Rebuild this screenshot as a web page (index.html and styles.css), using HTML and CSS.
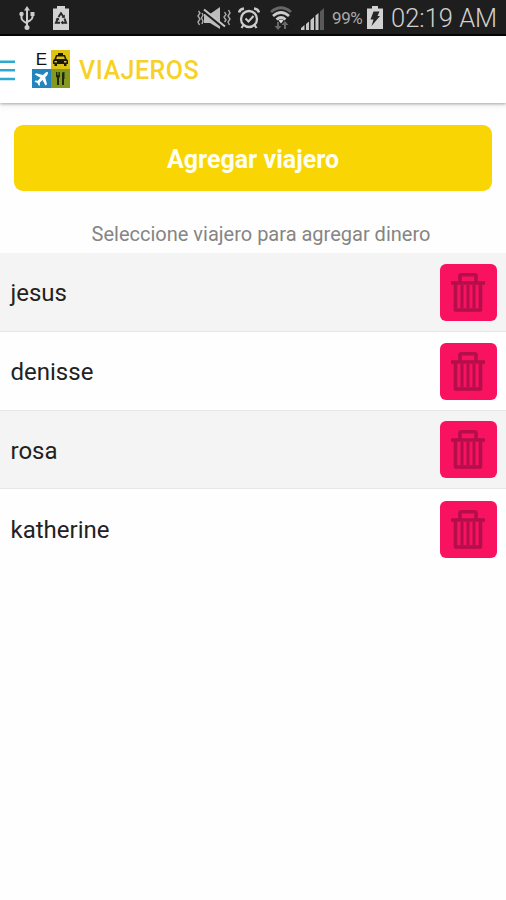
FILE: index.html
```
<!DOCTYPE html>
<html lang="es">

<head>
    <meta charset="UTF-8">
    <meta name="viewport" content="width=device-width, initial-scale=1.0">
    <title>Viajeros</title>
    <link rel="stylesheet" href="styles.css">
</head>

<body>
    <!-- shared icon -->
    <svg class="sprite" width="0" height="0">
        <symbol id="icon-trash" viewBox="0 0 34 39">
            <g fill="none" stroke="currentColor" stroke-width="3.6" stroke-linejoin="round">
                <path d="M9 9V3Q9 1.800 10.500 1.800H23.500Q25 1.800 25 3V9" />
                <path d="M0 10H34" />
                <path d="M4.500 10V37H29.500V10" />
                <path d="M11 12V35M17 12V35M23 12V35" stroke-width="3" />
            </g>
        </symbol>
    </svg>

    <div class="status-bar">
        <div class="status-left">
            <svg class="icon-usb" viewBox="0 0 16 24">
                <g fill="none" stroke="#ccc" stroke-width="2">
                    <path d="M8 3V21M2.500 8V12Q2.500 14 5 15.500L8 17.500M13.500 8V11Q13.500 13 11 14.500L8 16" />
                </g>
                <g fill="#ccc">
                    <path d="M8 0L11 4.500H5Z" />
                    <circle cx="2.500" cy="8" r="2.200" />
                    <path d="M11.500 6H15.500V10H11.500Z" />
                    <circle cx="8" cy="21.500" r="2.500" />
                </g>
            </svg>
            <svg class="icon-recycle" viewBox="0 0 18 24">
                <path d="M5 0H13V2.500H17V24H1V2.500H5Z" fill="#d2d2d2" />
                <g fill="none" stroke="#292929" stroke-width="2">
                    <path d="M6.500 11L9 7.300L11.600 11" />
                    <path d="M12.500 12.500L14 16.700H10.300" />
                    <path d="M8 16.700H4L5.800 12.500" />
                </g>
                <path d="M12.800 8.500V12L9.500 11.500ZM11 14.500V18.500L8.500 16.700ZM3.500 13L6.500 11.500L7.500 14.500Z" fill="#292929" />
            </svg>
        </div>

        <div class="status-right">
            <svg class="icon-mute" viewBox="0 0 34 22">
                <path d="M7 7H13L23 0V22L13 16H7Z" fill="#bdbdbd" />
                <path d="M6 3.500L28 21.500" stroke="#1e1e1e" stroke-width="3" />
                <path d="M7 2.500L28 19.500" stroke="#c4c4c4" stroke-width="2.200" />
                <g fill="none" stroke="#aaa" stroke-width="1.400">
                    <path d="M1.500 4L3 6L1 9L3 12L1 15L2.500 18" />
                    <path d="M5 6L6 8L4.500 11L6 14L5 17" />
                    <path d="M27.500 5L29 7.500L27 10L29 13L27.500 15" />
                    <path d="M31.500 3L33 6L31 9L33 12L31 15L32.500 18" />
                </g>
            </svg>
            <svg class="icon-alarm" viewBox="0 0 22 22">
                <g fill="none" stroke="#ccc">
                    <circle cx="11" cy="12" r="8" stroke-width="2.300" />
                    <path d="M1 5.500Q2 2 6 1.500M21 5.500Q20 2 16 1.500" stroke-width="2.500" />
                    <path d="M7.500 11.500L10.500 14.500L15.500 9" stroke-width="2" />
                    <path d="M5.500 18L3.500 21M16.500 18L18.500 21" stroke-width="2.200" />
                </g>
            </svg>
            <svg class="icon-wifi" viewBox="0 0 22 24">
                <g fill="none" stroke-width="2.700">
                    <path d="M1 6Q11 -2.500 21 6" stroke="#666" />
                    <path d="M3 10Q11 3 19 10" stroke="#ccc" />
                    <path d="M6.500 13.500Q11 9.500 15.500 13.500" stroke="#ccc" />
                </g>
                <path d="M8.500 14.500Q11 12.500 13.500 14.500L11 17.500Z" fill="#ddd" />
                <path d="M8 24L4.500 20H7V16H9V20H11.500ZM15 15L18.500 19H16V23H14V19H11.500Z" fill="#696969" />
            </svg>
            <svg class="icon-signal" viewBox="0 0 24 22">
                <g fill="#c6c6c6">
                    <path d="M0 22V20L3.500 17V22Z" />
                    <path d="M5 22V16L8 13.500V22Z" />
                    <path d="M9.500 22V12L13 9V22Z" />
                    <path d="M14.500 22V7.500L17.500 5V22Z" />
                </g>
                <path d="M19 22V3.500L23 0V22Z" fill="#595959" />
            </svg>
            <span class="battery-level">99%</span>
            <svg class="icon-battery" viewBox="0 0 16 23">
                <path d="M5 0H11V2.500H16V23H0V2.500H5Z" fill="#d2d2d2" />
                <path d="M6.500 5.500H12.500L10.500 10H13L4.500 20L6.500 13.500H3.500Z" fill="#252525" />
            </svg>
            <span class="clock">02:19 AM</span>
        </div>
    </div>

    <header class="header">
        <svg class="icon-menu" viewBox="0 0 15 21">
            <path d="M0 1.700H15M0 10.300H15M0 18.900H15" stroke="#2eaad2" stroke-width="2.500" />
        </svg>
        <div class="logo">
            <span class="logo-cell logo-letter">E</span>
            <span class="logo-cell logo-taxi">
                <svg viewBox="0 0 19 19">
                    <path d="M7 3H12V5H14L15.500 9Q17 9.500 17 11V14H15.500V16H13V14H6V16H3.500V14H2V11Q2 9.500 3.500 9L5 5H7Z" fill="#1b1a05" />
                    <path d="M6 6.500H13L13.800 9H5.200Z" fill="#ddc412" />
                    <path d="M3.500 11H6V12.500H3.500ZM13 11H15.500V12.500H13Z" fill="#ddc412" />
                </svg>
            </span>
            <span class="logo-cell logo-plane">
                <svg viewBox="0 0 19 19">
                    <path d="M15.800 3Q14.500 2.500 12.800 4.200L11 6L4 4.200L2.800 5.500L8.500 8.700L5.700 11.700L3.500 11.400L2.500 12.500L5.500 14L7 17L8 16L7.700 13.800L10.500 11L13.500 16.500L15 15.200L13.200 8.200L15 6.400Q16.500 4.500 15.800 3Z" fill="#fff" />
                </svg>
            </span>
            <span class="logo-cell logo-food">
                <svg viewBox="0 0 19 19">
                    <path d="M5 3H6V6H6.600V3H7.500V6H8.100V3H9V7.500L8 9V16H6V9L5 7.500ZM11 16V4Q11 3 13.500 3V10H13V16Z" fill="#20280b" />
                </svg>
            </span>
        </div>
        <h1 class="title">VIAJEROS</h1>
    </header>

    <main class="content">
        <button class="add-button" type="button"><span>Agregar viajero</span></button>
        <p class="hint">Seleccione viajero para agregar dinero</p>

        <ul class="traveler-list">
            <li class="traveler">
                <span class="traveler-name">jesus</span>
                <button class="delete-button" type="button" aria-label="Eliminar"><svg class="icon-trash"><use href="#icon-trash" /></svg></button>
            </li>
            <li class="traveler">
                <span class="traveler-name">denisse</span>
                <button class="delete-button" type="button" aria-label="Eliminar"><svg class="icon-trash"><use href="#icon-trash" /></svg></button>
            </li>
            <li class="traveler">
                <span class="traveler-name">rosa</span>
                <button class="delete-button" type="button" aria-label="Eliminar"><svg class="icon-trash"><use href="#icon-trash" /></svg></button>
            </li>
            <li class="traveler">
                <span class="traveler-name">katherine</span>
                <button class="delete-button" type="button" aria-label="Eliminar"><svg class="icon-trash"><use href="#icon-trash" /></svg></button>
            </li>
        </ul>
    </main>
</body>

</html>
```
FILE: styles.css
```
* {
    margin: 0;
    padding: 0;
    box-sizing: border-box;
}

body {
    font-family: Roboto, "Liberation Sans", sans-serif;
    min-height: 100vh;
    background-color: #fefefe;
    color: #222;
    overflow: hidden;
}

svg {
    display: block;
    flex-shrink: 0;
}

.sprite {
    position: absolute;
}

/* status bar */
.status-bar {
    display: flex;
    justify-content: space-between;
    height: 36px;
    padding: 1px 9px 0 19px;
    background-color: #1e1e1e;
    border-bottom: 2px solid #050505;
}

.status-left,
.status-right {
    display: flex;
    align-items: center;
}

.status-left {
    gap: 17px;
}

.icon-usb {
    width: 16px;
    height: 24px;
}

.icon-recycle {
    width: 18px;
    height: 24px;
}

.icon-mute {
    width: 34px;
    height: 22px;
    margin-right: 7px;
}

.icon-alarm {
    width: 22px;
    height: 22px;
    margin-right: 10px;
}

.icon-wifi {
    width: 22px;
    height: 24px;
    margin-right: 9px;
}

.icon-signal {
    width: 24px;
    height: 22px;
    margin: 3px 7px 0 0;
}

.battery-level {
    width: 35px;
    font-size: 17px;
    letter-spacing: -0.4px;
    color: #aaa;
    padding-top: 1px;
}

.icon-battery {
    width: 16px;
    height: 23px;
    margin-right: 8px;
}

.clock {
    width: 106px;
    font-size: 25.5px;
    font-weight: 300;
    color: #d0d0d0;
    white-space: nowrap;
    padding-top: 1px;
}

/* header */
.header {
    display: flex;
    align-items: center;
    height: 67px;
    padding-top: 2px;
    background-color: #fff;
    box-shadow: 0 1px 3px rgba(0, 0, 0, 0.35), 0 6px 6px rgba(0, 0, 0, 0.025);
}

.icon-menu {
    width: 15px;
    height: 21px;
    margin-right: 17px;
}

.logo {
    display: grid;
    grid-template-columns: 19px 19px;
    grid-template-rows: 19px 19px;
    margin-right: 9px;
    margin-bottom: 3px;
}

.logo-letter {
    font: 17px/19px "Liberation Sans", sans-serif;
    text-align: center;
    color: #111;
}

.logo-taxi {
    background-color: #ddc412;
}

.logo-plane {
    background-color: #2484bd;
}

.logo-food {
    background-color: #84991d;
}

.title {
    font-size: 25px;
    font-weight: 500;
    letter-spacing: 0.5px;
    color: #f7d126;
}

/* content */
.content {
    padding-top: 22px;
}

.add-button {
    display: block;
    width: 478px;
    height: 66px;
    margin-left: 14px;
    border: none;
    border-radius: 9px;
    background-color: #f9d503;
    font: bold 25px Roboto, sans-serif;
    color: #fffef2;
    padding-top: 2px;
}

.hint {
    height: 62px;
    padding: 8px 0 0 16px;
    font-size: 20px;
    line-height: 70px;
    text-align: center;
    color: #858585;
}

.traveler-list {
    list-style: none;
}

.traveler {
    display: flex;
    align-items: center;
    justify-content: space-between;
    height: 78.800px;
    padding: 1px 9.500px 0 10.500px;
    border-bottom: 1.500px solid #e6e6e6;
}

.traveler:nth-child(odd) {
    background-color: #f4f4f4;
}

.traveler:last-child {
    border-bottom: none;
}

.traveler-name {
    font-size: 24px;
    padding-top: 2px;
}

.delete-button {
    display: flex;
    align-items: center;
    justify-content: center;
    width: 57px;
    height: 57px;
    border: none;
    border-radius: 6px;
    background-color: #f81260;
    color: #b40e4b;
}

.icon-trash {
    width: 34px;
    height: 39px;
}
```
